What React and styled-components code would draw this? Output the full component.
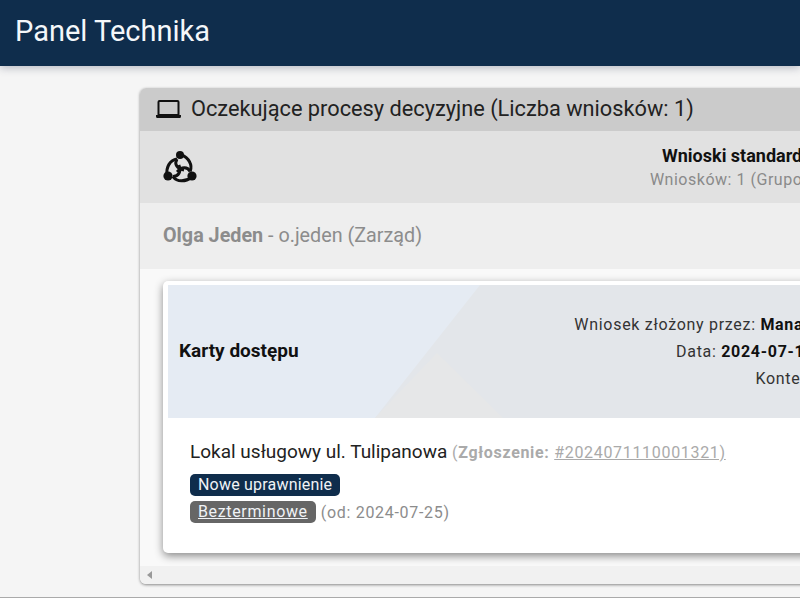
import React from "react";
import styled, { createGlobalStyle } from "styled-components";

const GlobalStyle = createGlobalStyle`
  html, body {
    margin: 0;
    height: 100%;
    overflow: hidden;
    background: #f5f5f5;
    font-family: Roboto, "Liberation Sans", sans-serif;
  }
`;

const Page = styled.div`
  width: 800px;
  height: 598px;
  overflow: hidden;
`;

const TopBar = styled.header`
  height: 66px;
  box-sizing: border-box;
  padding: 0 0 4px 15px;
  display: flex;
  align-items: center;
  background: #0f2d4c;
  color: #f4f7fa;
  font-size: 29px;
  box-shadow: 0 2px 8px rgba(40, 50, 80, 0.3);
`;

const Content = styled.main`
  padding: 22px 0 0 140px;
`;

const Panel = styled.section`
  width: 1360px;
  border-radius: 6px;
  background: #f9f9f9;
  overflow: hidden;
  box-shadow: 0 1px 3px rgba(0, 0, 0, 0.45);
`;

const PanelTitle = styled.h2`
  margin: 0;
  height: 43px;
  box-sizing: border-box;
  padding: 0 0 2px 16px;
  display: flex;
  align-items: center;
  gap: 10px;
  background: #cbcbcb;
  color: #222;
  font-size: 21.75px;
  font-weight: 400;
`;

const LaptopIcon = styled.svg`
  width: 25px;
  height: 18px;
  flex: none;
`;

const GroupRow = styled.div`
  position: relative;
  height: 72px;
  background: #e1e1e1;
  display: flex;
  flex-direction: column;
  align-items: center;
  justify-content: center;
  text-align: center;
`;

const GroupIcon = styled.svg`
  position: absolute;
  left: 22px;
  top: 19px;
  width: 36px;
  height: 36px;
`;

const GroupName = styled.div`
  font-size: 18px;
  font-weight: 700;
  line-height: 24px;
  color: #111;
`;

const GroupCount = styled.div`
  font-size: 16px;
  line-height: 23px;
  letter-spacing: 0.52px;
  color: #8a8a8a;
`;

const PersonRow = styled.div`
  height: 66px;
  box-sizing: border-box;
  padding: 0 0 2px 23px;
  display: flex;
  align-items: center;
  background: #eeeeee;
  color: #8c8c8c;
  font-size: 19.75px;
  strong {
    font-weight: 700;
  }
`;

const CardArea = styled.div`
  padding: 12px 23px 13px;
`;

const Card = styled.article`
  background: #fff;
  border-radius: 5px;
  padding: 4px 5px 0;
  box-shadow: 0 3px 8px rgba(0, 0, 0, 0.45);
`;

const CardHead = styled.div`
  position: relative;
  height: 133px;
  box-sizing: border-box;
  padding-bottom: 2px;
  display: flex;
  align-items: center;
  background: #e5ebf3;
  overflow: hidden;
`;

const HeadShade = styled.div`
  position: absolute;
  inset: 0;
  background: #e3e6ea;
  clip-path: polygon(207px 133px, 312px 0, 100% 0, 100% 100%);
`;

const HeadFacet = styled.div`
  position: absolute;
  inset: 0;
  background: #e6e7e8;
  clip-path: polygon(207px 133px, 269px 68px, 335px 133px);
`;

const CardTitle = styled.div`
  position: relative;
  padding-left: 11px;
  font-size: 19px;
  font-weight: 700;
  color: #111;
`;

const HeadInfo = styled.div`
  position: absolute;
  left: 0;
  right: 0;
  top: 26px;
  text-align: center;
  font-size: 16px;
  line-height: 27px;
  letter-spacing: 0.7px;
  color: #333;
  b {
    color: #111;
    font-weight: 700;
  }
`;

const CardBody = styled.div`
  height: 135px;
  box-sizing: border-box;
  padding: 22px 22px 0;
`;

const RequestLine = styled.div`
  font-size: 19px;
  line-height: 24px;
  color: #222;
`;

const RequestRef = styled.span`
  font-size: 16px;
  letter-spacing: 0.68px;
  color: #aaa;
  b {
    font-weight: 700;
  }
  a {
    color: inherit;
    text-decoration: underline;
  }
`;

const BadgeLine = styled.div`
  display: flex;
  align-items: center;
  gap: 5px;
  height: 24px;
  margin-top: ${(p) => (p.$first ? "8px" : "3px")};
`;

const Badge = styled.span`
  display: inline-block;
  height: 22px;
  line-height: 22px;
  padding: 0 8px;
  border-radius: 5px;
  background: ${(p) => (p.$grey ? "#666" : "#0f2d4c")};
  color: #f0f3f6;
  font-size: 16px;
  letter-spacing: ${(p) => (p.$grey ? "0.65px" : "0.2px")};
  text-decoration: ${(p) => (p.$grey ? "underline" : "none")};
`;

const BadgeNote = styled.span`
  font-size: 16px;
  letter-spacing: 0.7px;
  color: #8c8c8c;
`;

const ScrollBar = styled.div`
  height: 18px;
  display: flex;
  align-items: center;
  padding-left: 7px;
  background: #f1f1f1;
  &::before {
    content: "";
    border-style: solid;
    border-width: 4px 5px 4px 0;
    border-color: transparent #999 transparent transparent;
  }
`;

const Footer = styled.footer`
  margin-top: 13px;
  height: 20px;
  border-top: 1px solid #aaa;
`;

// one third of the woven ring, drawn three times around the middle
const Strand = (props) => (
  <g fill="none" stroke="#111" strokeWidth="3" {...props}>
    <path d="M5 25C4 17 8 10 15 9" />
    <path d="M15 9C12 14 15 19 22 20" />
  </g>
);

export default function App() {
  return (
    <Page>
      <GlobalStyle />
      <TopBar>Panel Technika</TopBar>
      <Content>
        <Panel>
          <PanelTitle>
            <LaptopIcon viewBox="0 0 25 18">
              <path
                d="M3.5 1h18a1 1 0 0 1 1 1v13h-20V2a1 1 0 0 1 1-1z"
                fill="none"
                stroke="#111"
                strokeWidth="2"
              />
              <path
                d="M0 15h9.5l.5 1h5l.5-1H25v1.5a1.5 1.5 0 0 1-1.5 1.5h-22A1.5 1.5 0 0 1 0 16.5z"
                fill="#111"
              />
            </LaptopIcon>
            Oczekujące procesy decyzyjne (Liczba wniosków: 1)
          </PanelTitle>
          <GroupRow>
            <GroupIcon viewBox="0 0 36 36">
              <circle cx="18" cy="5" r="4" fill="#111" />
              <circle cx="6" cy="26" r="4.6" fill="#111" />
              <circle cx="30" cy="26" r="4.6" fill="#111" />
              <Strand />
              <Strand transform="rotate(120 18 19)" />
              <Strand transform="rotate(240 18 19)" />
            </GroupIcon>
            <GroupName>Wnioski standardowe - Karty dostępów</GroupName>
            <GroupCount>Wniosków: 1 (Grupowanie: według obiektów)</GroupCount>
          </GroupRow>
          <PersonRow>
            <span>
              <strong>Olga Jeden</strong> - o.jeden (Zarząd)
            </span>
          </PersonRow>
          <CardArea>
            <Card>
              <CardHead>
                <HeadShade />
                <HeadFacet />
                <CardTitle>Karty dostępu</CardTitle>
                <HeadInfo>
                  <div>
                    Wniosek złożony przez: <b>Manager Jeden - m.jeden (Zarząd) Kas</b>
                  </div>
                  <div>
                    Data: <b>2024-07-11 10:00:13 (czwart.)</b>
                  </div>
                  <div>Kontekst: Lokale</div>
                </HeadInfo>
              </CardHead>
              <CardBody>
                <RequestLine>
                  Lokal usługowy ul. Tulipanowa{" "}
                  <RequestRef>
                    (<b>Zgłoszenie:</b> <a href="#r">#2024071110001321)</a>
                  </RequestRef>
                </RequestLine>
                <BadgeLine $first>
                  <Badge>Nowe uprawnienie</Badge>
                </BadgeLine>
                <BadgeLine>
                  <Badge $grey>Bezterminowe</Badge>
                  <BadgeNote>(od: 2024-07-25)</BadgeNote>
                </BadgeLine>
              </CardBody>
            </Card>
          </CardArea>
          <ScrollBar />
        </Panel>
      </Content>
      <Footer />
    </Page>
  );
}
